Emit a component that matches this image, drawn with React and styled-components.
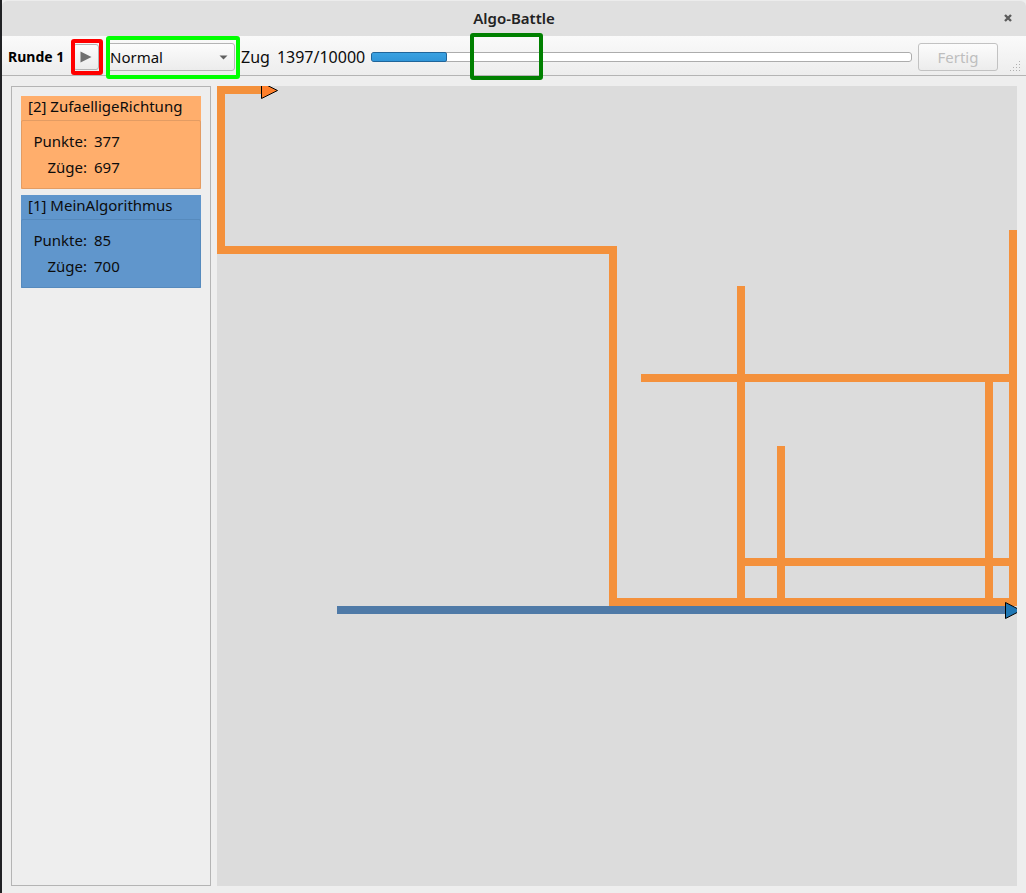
import React, { useState } from "react";
import styled, { createGlobalStyle } from "styled-components";

const GlobalStyle = createGlobalStyle`
  * { box-sizing: border-box; }
  body {
    margin: 0;
    background: #eeeeee;
    color: #0c0c0c;
    font-family: "Noto Sans", sans-serif;
    font-size: 15px;
    line-height: 20px;
  }
  button, select { font: inherit; color: inherit; }
`;

const Window = styled.div`
  min-height: 100vh;
  display: flex;
  flex-direction: column;
  border-left: 2px solid #202124;
  background: #eeeeee;
`;

const TitleBar = styled.header`
  height: 36px;
  display: grid;
  grid-template-columns: 36px 1fr 36px;
  align-items: center;
  padding-bottom: 2px;
  background: #e0e0e0;
  border-top: 1px solid #ececec;
  border-radius: 6px 6px 0 0;
`;

const Title = styled.h1`
  grid-column: 2;
  margin: 0;
  text-align: center;
  font-size: 15px;
  font-weight: 600;
  color: #222222;
`;

const CloseButton = styled.button`
  justify-self: center;
  display: flex;
  padding: 4px;
  border: 0;
  background: none;
`;

const Toolbar = styled.div`
  height: 40px;
  display: flex;
  align-items: center;
  gap: 6px;
  padding: 2px 4px 0 6px;
  background: linear-gradient(#fafafa, #ededed);
  border-bottom: 1px solid #b4b4b4;
`;

const Round = styled.strong`
  width: 59px;
  font-size: 14px;
  font-weight: 700;
  color: #000000;
  white-space: nowrap;
`;

const Highlight = styled.div`
  position: relative;
  display: flex;
  &::after {
    content: "";
    position: absolute;
    inset: ${(p) => p.$inset};
    border: 4px solid ${(p) => p.$color};
    border-radius: 3px;
    pointer-events: none;
  }
`;

const controlFace = `
  border: 1px solid #b4b4b4;
  border-radius: 3px;
  background: linear-gradient(#fcfcfc, #ececec);
`;

const PlayButton = styled.button`
  ${controlFace}
  width: 26px;
  height: 26px;
  margin-right: 2px;
  display: flex;
  align-items: center;
  justify-content: center;
  padding: 0;
`;

const SpeedBox = styled.div`
  position: relative;
  display: flex;
  svg {
    position: absolute;
    right: 7px;
    top: 12px;
    pointer-events: none;
  }
`;

const Speed = styled.select`
  ${controlFace}
  appearance: none;
  width: 128px;
  height: 28px;
  padding: 0 20px 0 2px;
`;

const Turn = styled.label`
  display: flex;
  gap: 7px;
  font-size: 16px;
  white-space: nowrap;
`;

const ProgressArea = styled.div`
  position: relative;
  flex: 1;
  display: flex;
`;

const Progress = styled.progress`
  appearance: none;
  width: 100%;
  height: 10px;
  border: 0;
  border-radius: 3px;
  overflow: hidden;
  &::-webkit-progress-bar {
    background: #ffffff;
    border-radius: 3px;
    box-shadow: inset 0 0 0 1px #acacac;
  }
  &::-webkit-progress-value {
    background: linear-gradient(#3aa2e2, #3196d8);
    border: 1px solid #20659a;
    border-radius: 2px;
  }
`;

const ProgressMark = styled.span`
  position: absolute;
  top: -19px;
  left: 18.3%;
  width: 73px;
  height: 47px;
  border: 4px solid #008000;
  border-radius: 3px;
  pointer-events: none;
`;

const DoneButton = styled.button`
  ${controlFace}
  width: 80px;
  height: 28px;
  padding: 0;
  border-color: #c2c2c2;
  &:disabled { color: #bebebe; }
`;

const Grip = styled.svg`
  align-self: flex-end;
  margin: 0 0 3px 5px;
`;

const Main = styled.main`
  flex: 1;
  display: flex;
  gap: 6px;
  padding: 10px 9px 7px;
`;

const Players = styled.aside`
  width: 200px;
  flex: none;
  display: flex;
  flex-direction: column;
  gap: 6px;
  padding: 9px;
  border: 1px solid #b4b4b4;
`;

const Card = styled.section`
  height: 93px;
  background: ${(p) => p.$color};
`;

const PlayerName = styled.h2`
  margin: 0;
  height: 24px;
  padding: 0 7px;
  font-size: 15px;
  font-weight: 400;
  white-space: nowrap;
`;

const Stats = styled.dl`
  margin: 0;
  height: 69px;
  display: grid;
  grid-template-columns: 55px 1fr;
  grid-auto-rows: 26px;
  align-content: start;
  column-gap: 7px;
  padding: 7px 10px 0;
  line-height: 26px;
  border: 1px solid ${(p) => p.$edge};
  border-radius: 2px;
  dt { text-align: right; white-space: nowrap; }
  dd { margin: 0; }
`;

const Arena = styled.svg`
  flex: 1;
  min-width: 0;
  display: block;
  align-self: flex-start;
  background: #dcdcdc;
`;

const players = [
  { id: 2, name: "ZufaelligeRichtung", points: 377, moves: 697, color: "#ffae6c", edge: "#e39c63" },
  { id: 1, name: "MeinAlgorithmus", points: 85, moves: 700, color: "#6096cc", edge: "#568abd" },
];

const orangeTrail =
  "M44 4H4V164H396V516H796V144M424 292H796M524 200V516M564 360V516M772 292V516M524 476H796";

export default function App() {
  const [speed, setSpeed] = useState("Normal");
  return (
    <>
      <GlobalStyle />
      <Window>
        <TitleBar>
          <Title>Algo-Battle</Title>
          <CloseButton aria-label="Schließen">
            <svg width="8" height="8" viewBox="0 0 8 8">
              <path d="M1 1L7 7M7 1L1 7" stroke="#5c5c5c" strokeWidth="2.4" />
            </svg>
          </CloseButton>
        </TitleBar>
        <Toolbar>
          <Round>Runde 1</Round>
          <Highlight $color="#ff0000" $inset="-5px -2px -5px -2px">
            <PlayButton aria-label="Start">
              <svg width="12" height="12" viewBox="0 0 12 12">
                <path d="M0.5 0.5V11.5L11.5 6Z" fill="#707070" />
              </svg>
            </PlayButton>
          </Highlight>
          <Highlight $color="#00ff00" $inset="-7px -5px -8px -1px">
            <SpeedBox>
              <Speed aria-label="Geschwindigkeit" value={speed} onChange={(e) => setSpeed(e.target.value)}>
                <option>Langsam</option>
                <option>Normal</option>
                <option>Schnell</option>
              </Speed>
              <svg width="9" height="5" viewBox="0 0 9 5">
                <path d="M0.5 0.5H8.5L4.5 4.5Z" fill="#606060" />
              </svg>
            </SpeedBox>
          </Highlight>
          <Turn htmlFor="turns">
            <span>Zug</span>
            <span>1397/10000</span>
          </Turn>
          <ProgressArea>
            <Progress id="turns" value={1397} max={10000} />
            <ProgressMark />
          </ProgressArea>
          <DoneButton disabled>Fertig</DoneButton>
          <Grip width="13" height="12" viewBox="0 0 13 12">
            <path
              d="M10 1.500h1M7 4.500h1M10 4.500h1M4 7.500h1M7 7.500h1M10 7.500h1M1 10.500h1M4 10.500h1M7 10.500h1M10 10.500h1"
              stroke="#b0b0b0"
            />
          </Grip>
        </Toolbar>
        <Main>
          <Players>
            {players.map((p) => (
              <Card key={p.id} $color={p.color}>
                <PlayerName>{`[${p.id}] ${p.name}`}</PlayerName>
                <Stats $edge={p.edge}>
                  <dt>Punkte:</dt>
                  <dd>{p.points}</dd>
                  <dt>Züge:</dt>
                  <dd>{p.moves}</dd>
                </Stats>
              </Card>
            ))}
          </Players>
          <Arena viewBox="0 0 800 800" role="img" aria-label="Spielfeld">
            <g fill="none" strokeWidth="8" shapeRendering="crispEdges">
              <path d={orangeTrail} stroke="#f4913c" />
              <path d="M0 4H8M796 512V520M392 516H800" stroke="#f4913c" />
              <path d="M120 524H792" stroke="#4f7aa7" />
            </g>
            <path d="M44.500 -4V12.500L60.500 4.500L44.500 -3.500" fill="#ff7f2a" stroke="#000000" />
            <path d="M788.500 516.500V532.500L804 524.500Z" fill="#1f77b4" stroke="#000000" />
          </Arena>
        </Main>
      </Window>
    </>
  );
}
